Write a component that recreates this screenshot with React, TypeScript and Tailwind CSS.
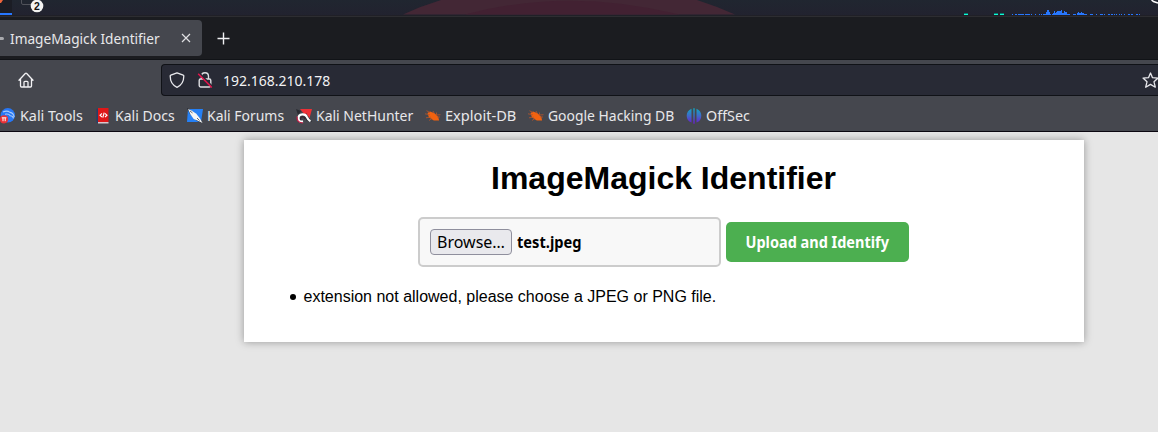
import React from "react";

const load: [number, number, number][] = [
  [1012, 1, 1], [1015, 2, 1], [1018, 6, 1], [1025, 5, 1], [1031, 1, 1], [1035, 1, 1],
  [1039, 1, 1], [1041, 1, 1], [1043, 3, 1], [1046, 1, 3], [1047, 2, 5], [1049, 1, 3], [1050, 1, 1],
  [1052, 1, 1], [1053, 1, 2], [1054, 1, 4], [1055, 1, 2], [1056, 1, 3], [1057, 2, 4],
  [1059, 2, 4], [1061, 1, 5], [1062, 1, 2], [1063, 1, 2], [1064, 1, 4], [1065, 2, 3],
  [1067, 3, 1], [1073, 3, 1], [1077, 1, 2], [1078, 1, 3], [1079, 2, 2], [1081, 1, 3],
  [1082, 2, 2], [1084, 3, 1], [1090, 3, 1], [1096, 1, 1], [1100, 3, 1], [1104, 1, 1],
  [1108, 2, 1], [1111, 2, 1], [1114, 1, 1], [1116, 1, 1], [1119, 1, 1], [1121, 1, 1],
  [1124, 1, 1], [1128, 2, 1], [1131, 2, 1], [1136, 2, 1], [1139, 1, 1],
];

function DesktopStrip() {
  return (
    <svg className="block h-4 w-full shrink-0" viewBox="0 0 1158 16">
      <defs>
        <linearGradient id="sky" x1="0" y1="0" x2="0" y2="1">
          <stop offset="0" stopColor="#202630" />
          <stop offset="1" stopColor="#22222f" />
        </linearGradient>
      </defs>
      <rect width="1158" height="16" fill="url(#sky)" />
      <rect width="12" height="14" fill="#1b1d25" />
      <path d="M0 0h3L1 3H0z" fill="#ef653c" />
      <rect y="13" width="12" height="2" fill="#2777ff" />
      <path d="M403 14.5Q421 6 441 0H697Q716 6 735 14.5z" fill="#432735" />
      <path d="M465 14.5Q567-13 680 14.5z" fill="#422132" />
      <path d="M21.5 0v3q0 1.500 1.500 1.500h9" fill="none" stroke="#50525a" />
      {[964, 994, 1000].map((x) => (
        <g key={x}>
          <rect x={x} y="13" width="4" height="1" fill="#087b70" />
          <rect x={x} y="14" width="4" height="1" fill="#0ffbd5" />
        </g>
      ))}
      {load.map(([x, w, h]) => (
        <rect key={x} x={x} y={15 - h} width={w} height={h} fill="#2777ff" />
      ))}
      <path d="M1151.500 0l2 1.500 4.500 1.500" fill="none" stroke="#fff" strokeWidth="1.500" />
      <path d="M0 15.500H1158" stroke="#202027" />
      <circle cx="37" cy="6" r="6.300" fill="#f3f3f1" />
      <text x="37" y="10" textAnchor="middle" fontFamily="Liberation Sans, sans-serif" fontSize="10.500" fontWeight="700" fill="#111">2</text>
    </svg>
  );
}

function HomeIcon() {
  return (
    <svg className="h-4 w-4" viewBox="0 0 16 16" fill="none" stroke="#f2f2f4" strokeWidth="1.300" strokeLinejoin="round" strokeLinecap="round">
      <path d="M1 8.200 7.300 1.500q.7-.6 1.400 0L15 8.200M2.500 7v6.900q0 1.100 1.100 1.100h8.800q1.100 0 1.100-1.100V7M6 14.800V10.200q0-.9.9-.9h2.200q.9 0 .9.900v4.600" />
    </svg>
  );
}

function ShieldIcon() {
  return (
    <svg className="h-4 w-4" viewBox="0 0 16 16" fill="none" stroke="#e8e8ec" strokeWidth="1.300" strokeLinejoin="round">
      <path d="M8 .8 14.200 3.200q.6.2.6.900C14.800 9 12.600 13.300 8 15.300 3.400 13.300 1.200 9 1.200 4.100q0-.7.6-.9z" />
    </svg>
  );
}

function InsecureIcon() {
  return (
    <svg className="h-4 w-4" viewBox="0 0 16 16" fill="none">
      <path d="M4.500 6.500V4.300Q4.500.7 8 .7t3.500 3.600v2.200M3.600 7h8.800q1.400 0 1.400 1.400v5.200q0 1.400-1.400 1.400H3.600q-1.400 0-1.400-1.400V8.400Q2.200 7 3.600 7z" stroke="#dedee2" strokeWidth="1.400" />
      <path d="M2.300 1.200 15.500 14.800" stroke="#282a35" strokeWidth="2" />
      <path d="M1.200 1.700 14.800 15.500" stroke="#e6134c" strokeWidth="1.500" />
    </svg>
  );
}

function ToolsIcon() {
  return (
    <svg className="h-4 w-4" viewBox="0 0 16 16">
      <circle cx="7.800" cy="7.300" r="7.200" fill="#2777f5" />
      <path d="M3 4q4-2 7 .4 3.500.5 4.200 4.800M5 6.200q4-.7 5.200 1.600 2.600.1 3.300 2.600" fill="none" stroke="#a9cbfa" strokeWidth="1.100" />
      <circle cx="4" cy="11.300" r="4.100" fill="#e83136" />
      <path d="M1.800 9.800h4.600M3 10v3.200M5.200 10v3.200" stroke="#fff" strokeWidth="1" />
    </svg>
  );
}

function DocsIcon() {
  return (
    <svg className="h-4 w-4" viewBox="0 0 16 16">
      <path d="M1.500 1 4 0v15.500L1.500 14.500z" fill="#263f69" />
      <path d="M3 0h10.500v14H3z" fill="#df1718" />
      <path d="M3 14h10.500v1.500H3z" fill="#d9c6cc" />
      <path d="m7 5.500-2 1.700L7 9m3-3.500 2 1.700L10 9M9.200 4.600l-1.400 5" fill="none" stroke="#fff" strokeWidth="1.100" />
    </svg>
  );
}

function ForumsIcon() {
  return (
    <svg className="h-4 w-4" viewBox="0 0 16 16">
      <path d="M1 1h15l-2 13H0z" fill="#2580f5" />
      <path d="M0 0l5 3 7 7 3 5-5-2-7-7z" fill="#20242b" />
      <path d="M1 1l3.500 1.500 4.800 3.300 3.700 4.700 2.500 4.500-4.200-1.900-4.600-2.100-3.200-4.600z" fill="#f4f5f5" />
      <path d="m3 3 2.500 2M10 10l2.500 2.500" stroke="#40464e" strokeWidth=".8" />
    </svg>
  );
}

function HunterIcon() {
  return (
    <svg className="h-4 w-4" viewBox="0 0 16 16">
      <path d="M4 1h12l-3 11z" fill="#ee3036" />
      <path d="M0 1l5 2-3 4zM10 5l6 9-5-1-2-3z" fill="#292b31" />
      <path d="M7 13.200Q2.800 14.400 2.500 10.700 2.200 6.500 6.500 6.300q3.300-.1 4.300 2.600 1.200 3 3.700 4.300" fill="none" stroke="#fff" strokeWidth="2.200" />
      <path d="M1 8.500Q.7 15 7 15" fill="none" stroke="#c71c46" strokeWidth="1.200" />
      <path d="M4.700 11.700q-.5-2.800 1.800-3.100 1.900 0 2.600 2.400" fill="none" stroke="#35242d" strokeWidth="1.200" />
    </svg>
  );
}

function BugIcon() {
  return (
    <svg className="h-4 w-4" viewBox="0 0 16 16">
      <path d="M2.500 5 5 3.600 9.600 5.200l3.700 3.800.8 3.600-5.300-.2L4 9.400z" fill="#f2620f" />
      <path d="M1.500 2.700 5 4.600M0 5.800l5 1M1 9.800l5-.7M4 12.500l3-2M8 3l1.500 3M11.500 4.500V7l4-.3M12 9h3" fill="none" stroke="#b8562b" strokeWidth=".8" />
    </svg>
  );
}

function OffSecIcon() {
  return (
    <svg className="h-4 w-4" viewBox="0 0 16 16">
      <defs>
        <linearGradient id="offsec" x1="0" y1="0" x2="0" y2="16" gradientUnits="userSpaceOnUse">
          <stop offset="0" stopColor="#0dabc2" />
          <stop offset=".5" stopColor="#4069c9" />
          <stop offset="1" stopColor="#6d17cc" />
        </linearGradient>
      </defs>
      <path d="M5.500.8v13.800Q.7 12.500.7 7.700T5.500.8zM7.300.3h1.400v15.400H7.300zM10.500.8v13.800q4.800-2.100 4.800-6.900T10.500.8z" fill="url(#offsec)" />
    </svg>
  );
}

const bookmarks = [
  { label: "Kali Tools", Icon: ToolsIcon, box: "w-[95px]", fit: "scale-x-[0.955]" },
  { label: "Kali Docs", Icon: DocsIcon, box: "w-[92px]", fit: "scale-x-[0.935]" },
  { label: "Kali Forums", Icon: ForumsIcon, box: "w-[109px]", fit: "scale-x-[0.93]" },
  { label: "Kali NetHunter", Icon: HunterIcon, box: "w-[129px]", fit: "scale-x-[0.932]" },
  { label: "Exploit-DB", Icon: BugIcon, box: "w-[103px]", fit: "scale-x-[0.973]" },
  { label: "Google Hacking DB", Icon: BugIcon, box: "w-[158px]", fit: "scale-x-[0.927]" },
  { label: "OffSec", Icon: OffSecIcon, box: "w-[90px]", fit: "scale-x-[0.955]" },
];

export default function App() {
  return (
    <div className="flex h-[432px] w-full flex-col overflow-hidden bg-[#e6e6e6] font-['Noto_Sans',sans-serif]">
      <DesktopStrip />
      <header className="flex h-[116px] shrink-0 flex-col border-b border-[#0b0710] bg-[#45474e] text-[#e8e8ea]">
        <div className="flex h-11 shrink-0 border-t border-b border-t-[#2d2d31] border-b-[#111317] bg-[#1b1c20] pt-[3px]">
          <div className="flex h-9 w-[202px] items-center rounded-r bg-[#45474e]">
            <span className="h-[3px] w-1 rounded-r-full bg-[#a9aaae]" />
            <span className="ml-[6px] w-[166px] origin-left scale-x-[0.91] whitespace-nowrap text-[15px] leading-5">ImageMagick Identifier</span>
            <svg className="h-5 w-5" viewBox="0 0 20 20" fill="none" stroke="#e0e0e2" strokeWidth="1.200"><path d="m6 6 8 8m0-8-8 8" /></svg>
          </div>
          <svg className="ml-[15px] mt-[12px] h-[13px] w-[13px]" viewBox="0 0 13 13" stroke="#f0f0f2" strokeWidth="1.400"><path d="M6.500.5v12m-6-6h12" /></svg>
        </div>
        <div className="flex h-10 shrink-0 items-center">
          <div className="flex w-[161px] pl-[18px]"><HomeIcon /></div>
          <div className="flex h-8 flex-1 items-center rounded-l border border-r-0 border-[#101217] bg-[#282a35] pl-[7px]">
            <ShieldIcon />
            <span className="ml-3 flex"><InsecureIcon /></span>
            <span className="ml-[10px] origin-left scale-x-[0.933] text-[15px] leading-5 text-[#f2f2f4]">192.168.210.178</span>
            <svg className="-mr-px ml-auto h-[17px] w-[17px] shrink-0" viewBox="0 0 17 17" fill="none" stroke="#e8e8ec" strokeWidth="1.300" strokeLinejoin="round">
              <path d="m8.500 1 2 4.700 5.500.4-4 3.700 1.300 5.400-4.800-2.800-4.800 2.800L5 9.800 1 6.100l5.500-.4z" />
            </svg>
          </div>
        </div>
        <nav className="flex h-[31px] items-center">
          {bookmarks.map(({ label, Icon, box, fit }) => (
            <div key={label} className={`flex shrink-0 items-center gap-1 whitespace-nowrap text-[15px] leading-5 ${box}`}>
              <Icon />
              <span className={`-mt-0.5 origin-left ${fit}`}>{label}</span>
            </div>
          ))}
        </nav>
      </header>
      <main className="ml-[244px] mt-2 h-[202px] w-[840px] shrink-0 bg-white px-5 text-black shadow-[0_0_8px_rgba(0,0,0,0.35)]">
        <h1 className="pr-px pt-5 text-center font-['Liberation_Sans',sans-serif] text-[32px] font-bold leading-9">ImageMagick Identifier</h1>
        <form className="ml-[154px] mt-[21px] flex items-center gap-[5px]">
          <div className="flex h-[50px] w-[303px] items-center rounded-[5px] border-2 border-[#ccc] bg-[#f8f8f8] px-[10px]">
            <button type="button" className="h-[26px] w-[82px] whitespace-nowrap rounded border border-[#8f8f9d] bg-[#e9e9ed] text-base leading-5">Browse…</button>
            <span className="ml-[5px] origin-left scale-x-[0.915] text-base font-bold leading-5">test.jpeg</span>
          </div>
          <button type="button" className="flex h-10 w-[183px] items-center justify-center whitespace-nowrap rounded-[5px] bg-[#4caf50] text-base font-bold leading-5 text-white">
            <span className="scale-x-[0.905]">Upload and Identify</span>
          </button>
        </form>
        <ul className="mt-[21px] pl-[26px] font-['Liberation_Sans',sans-serif] text-base leading-[18px]">
          <li className="flex items-center gap-2">
            <span className="h-1.5 w-1.5 rounded-full bg-black" />
            <span className="-ml-[0.5px]">extension not allowed, please choose a JPEG or PNG file.</span>
          </li>
        </ul>
      </main>
    </div>
  );
}
